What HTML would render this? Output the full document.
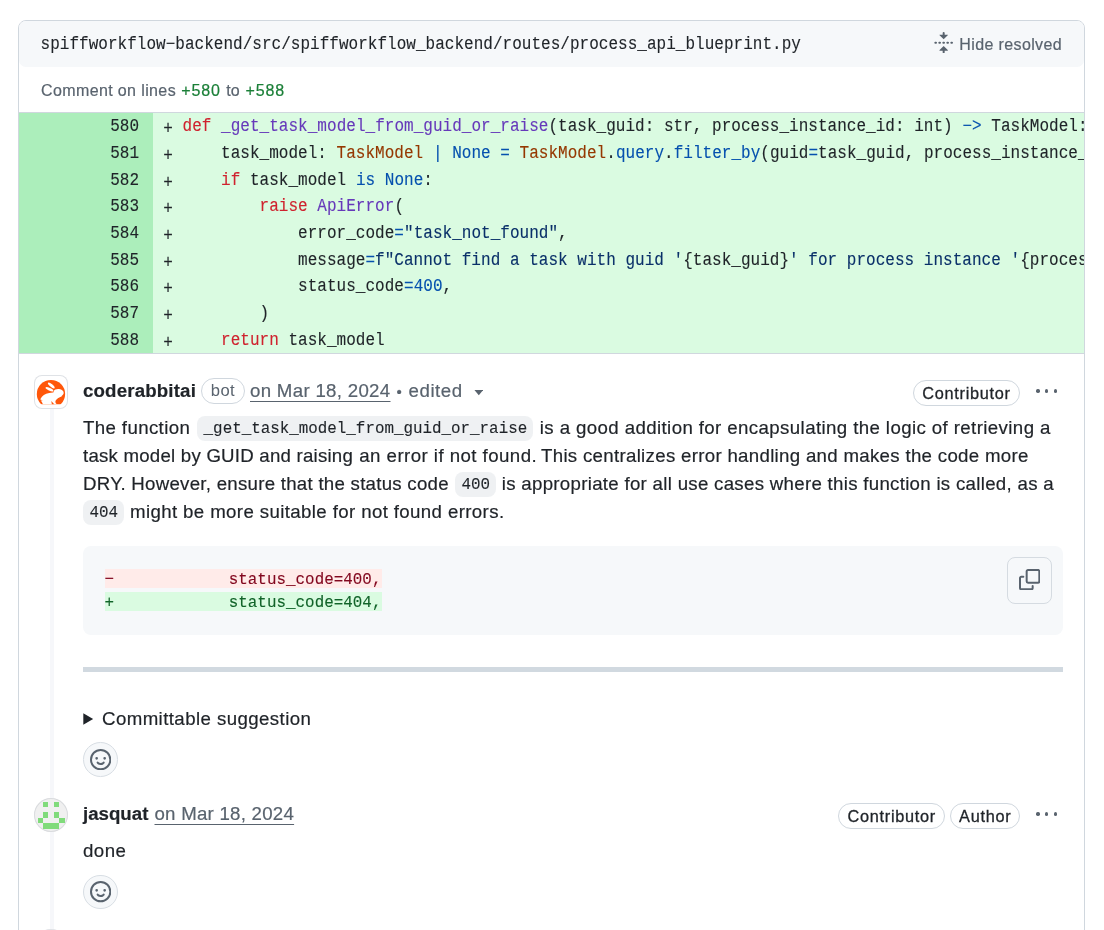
<!DOCTYPE html>
<html>
<head>
<meta charset="utf-8">
<style>
html,body{margin:0;padding:0;background:#fff;}
body{width:1104px;height:930px;overflow:hidden;position:relative;will-change:transform;font-family:"Liberation Sans",sans-serif;color:#1f2328;}
.abs{position:absolute;white-space:nowrap;}
.mono{font-family:"Liberation Mono",monospace;}
#box{position:absolute;left:18px;top:20px;width:1065px;height:930px;border:1px solid #d0d7de;border-radius:8px;}
#hdr{position:absolute;left:19px;top:21px;width:1065px;height:46px;background:#f6f8fa;border-radius:7px;}
#fname{left:40.5px;top:35.5px;font-size:16px;line-height:18px;color:#1f2328;letter-spacing:0.025px;-webkit-text-stroke:0.12px;transform:scaleY(1.09);transform-origin:0 74%;}
#hide{-webkit-text-stroke:0.2px;left:959.3px;top:36px;font-size:16px;line-height:18px;color:#59636e;}
.col{-webkit-text-stroke:0.2px;top:81.5px;font-size:16px;line-height:18px;color:#59636e;}
.col.g{color:#1a7f37;}
#code{position:absolute;left:19px;top:112.2px;width:1065px;height:242px;background:#dafbe1;overflow:hidden;border-top:1px solid #d0d7de;border-bottom:1px solid #d0d7de;box-sizing:border-box;}
#gut{position:absolute;left:0;top:0;width:134px;height:241px;background:#aceebb;}
.ln{position:absolute;left:0;width:120px;-webkit-text-stroke:0.12px;transform:scaleY(1.09);transform-origin:0 74%;text-align:right;font-size:16px;line-height:26.667px;height:26.667px;color:#1f2328;}
.cl{position:absolute;left:144.3px;letter-spacing:0.025px;-webkit-text-stroke:0.12px;transform:scaleY(1.09);transform-origin:0 74%;font-size:16px;line-height:26.667px;height:26.667px;white-space:pre;color:#1f2328;}
.pl{position:relative;top:2.8px;}
.k{color:#cf222e;}.f{color:#6639ba;}.c{color:#0550ae;}.v{color:#953800;}.s{color:#0a3069;}

#thread{position:absolute;left:50.1px;top:407px;width:3.7px;height:530px;background:#f6f7fa;}
.av1{position:absolute;left:34.1px;top:374.9px;width:33.7px;height:33.9px;border-radius:8px;background:#fff;box-shadow:inset 0 0 0 1px #dfe2e6;}
.av1 i{position:absolute;left:2.5px;top:2px;width:29px;height:29px;border-radius:50%;background:#ff570a;}
.av2{position:absolute;left:34px;top:798px;width:34px;height:33.8px;border-radius:50%;background:#f0f0f0;box-shadow:inset 0 0 0 1px #d9dbde;overflow:hidden;}
.av3{position:absolute;left:34px;top:929.2px;width:34px;height:34px;border-radius:50%;background:#f0f0f0;box-shadow:inset 0 0 0 1px #dfe2e6;}
.t{position:absolute;white-space:pre;font-size:18.667px;line-height:28px;color:#1f2328;-webkit-text-stroke:0.2px;}
.b{font-weight:bold;}
.m{color:#59636e;}
.u{text-decoration:underline;text-underline-offset:4px;text-decoration-thickness:1.3px;}
.pill{position:absolute;box-sizing:border-box;border:1px solid #d0d7de;border-radius:16px;font-size:16.3px;line-height:24px;text-align:center;white-space:nowrap;color:#1f2328;}
.pw{-webkit-text-stroke:0.3px;letter-spacing:0.72px;text-indent:0.7px;}
.ic{position:absolute;background:rgba(175,184,193,0.2);border-radius:8px;}
.ict{position:absolute;white-space:pre;font-family:"Liberation Mono",monospace;font-size:15.867px;line-height:28px;color:#1f2328;-webkit-text-stroke:0.12px;transform:scaleY(1.09);transform-origin:0 72%;margin-top:1.3px;}
#pre{position:absolute;left:83px;top:546px;width:980px;height:88.5px;background:#f6f8fa;border-radius:8px;}
.dl{position:absolute;left:105px;width:277.3px;height:19px;}
.dlt{position:absolute;left:104.6px;white-space:pre;font-family:"Liberation Mono",monospace;font-size:15.867px;line-height:23px;letter-spacing:0.03px;-webkit-text-stroke:0.12px;transform:scaleY(1.09);transform-origin:0 72%;margin-top:1.6px;}
#copy{position:absolute;left:1007px;top:557px;width:45px;height:47px;box-sizing:border-box;border:1px solid #d5dbe1;border-radius:8px;background:#f6f8fa;}
#hr{position:absolute;left:83px;top:667px;width:980px;height:4.7px;background:#d1d9e0;}
.emo{position:absolute;left:83px;width:34.7px;height:34.7px;box-sizing:border-box;border:1px solid #d8dee4;border-radius:50%;background:#f6f8fa;}
.emo svg{position:absolute;left:5.7px;top:5.7px;}
.dot{position:absolute;width:3.4px;height:3.4px;border-radius:50%;background:#59636e;}
</style>
</head>
<body>
<div id="box"></div>
<div id="hdr"></div>
<div id="fname" class="abs mono">spiffworkflow&#8722;backend/src/spiffworkflow_backend/routes/process_api_blueprint.py</div>
<svg class="abs" style="left:933px;top:32px" width="21.33" height="21.33" viewBox="0 0 16 16" fill="#59636e"><path d="M10.896 2H8.75V.75a.75.75 0 0 0-1.5 0V2H5.104a.25.25 0 0 0-.177.427l2.896 2.896a.25.25 0 0 0 .354 0l2.896-2.896A.25.25 0 0 0 10.896 2ZM8.75 15.25a.75.75 0 0 1-1.5 0V14H5.104a.25.25 0 0 1-.177-.427l2.896-2.896a.25.25 0 0 1 .354 0l2.896 2.896a.25.25 0 0 1-.177.427H8.75v1.25Zm-6.5-6.5a.75.75 0 0 0 0-1.5h-.5a.75.75 0 0 0 0 1.5h.5ZM6 8a.75.75 0 0 1-.75.75h-.5a.75.75 0 0 1 0-1.5h.5A.75.75 0 0 1 6 8Zm2.25.75a.75.75 0 0 0 0-1.5h-.5a.75.75 0 0 0 0 1.5h.5ZM12 8a.75.75 0 0 1-.75.75h-.5a.75.75 0 0 1 0-1.5h.5A.75.75 0 0 1 12 8Zm2.25.75a.75.75 0 0 0 0-1.5h-.5a.75.75 0 0 0 0 1.5h.5Z"/></svg>
<div id="hide" style="letter-spacing:0.375px;" class="abs">Hide resolved</div>
<div class="abs col" id="ca" style="left:41px;letter-spacing:0.38px;">Comment on lines</div>
<div class="abs col g" id="cb" style="left:181.3px;letter-spacing:0.85px;">+580</div>
<div class="abs col" id="cc" style="left:226.3px;">to</div>
<div class="abs col g" id="cd" style="left:245.5px;letter-spacing:0.85px;">+588</div>
<div id="code" class="mono">
<div id="gut"></div>
<div class="ln" style="top:1.3px">580</div><div class="cl" style="top:1.3px"><span class="pl">+</span> <span class="k">def</span> <span class="f">_get_task_model_from_guid_or_raise</span>(task_guid: str, process_instance_id: int) <span class="c">&#8722;&gt;</span> TaskModel:</div>
<div class="ln" style="top:27.967px">581</div><div class="cl" style="top:27.967px"><span class="pl">+</span>     task_model: <span class="v">TaskModel</span> <span class="c">|</span> <span class="c">None</span> <span class="c">=</span> <span class="v">TaskModel</span>.<span class="c">query</span>.<span class="c">filter_by</span>(guid<span class="c">=</span>task_guid, process_instance_id<span class="c">=</span>process_instance_id).first()</div>
<div class="ln" style="top:54.634px">582</div><div class="cl" style="top:54.634px"><span class="pl">+</span>     <span class="k">if</span> task_model <span class="c">is</span> <span class="c">None</span>:</div>
<div class="ln" style="top:81.301px">583</div><div class="cl" style="top:81.301px"><span class="pl">+</span>         <span class="k">raise</span> <span class="f">ApiError</span>(</div>
<div class="ln" style="top:107.968px">584</div><div class="cl" style="top:107.968px"><span class="pl">+</span>             error_code<span class="c">=</span><span class="s">"task_not_found"</span>,</div>
<div class="ln" style="top:134.635px">585</div><div class="cl" style="top:134.635px"><span class="pl">+</span>             message<span class="c">=</span><span class="s">f"Cannot find a task with guid '</span>{task_guid}<span class="s">' for process instance '</span>{process_instance_id}<span class="s">'"</span>,</div>
<div class="ln" style="top:161.302px">586</div><div class="cl" style="top:161.302px"><span class="pl">+</span>             status_code<span class="c">=</span><span class="c">400</span>,</div>
<div class="ln" style="top:187.969px">587</div><div class="cl" style="top:187.969px"><span class="pl">+</span>         )</div>
<div class="ln" style="top:214.636px">588</div><div class="cl" style="top:214.636px"><span class="pl">+</span>     <span class="k">return</span> task_model</div>
</div>

<div id="thread"></div>
<div class="av1"></div>
<svg class="abs" style="left:32px;top:372px" width="40" height="40" viewBox="0 0 930 930">
<defs><clipPath id="cc1"><circle cx="441" cy="514" r="329"/></clipPath><clipPath id="cc2"><rect x="0" y="0" width="930" height="752"/></clipPath></defs>
<g clip-path="url(#cc2)"><circle cx="441" cy="514" r="329" fill="#ff570a"/>
<g clip-path="url(#cc1)" fill="#fff">
<ellipse cx="448" cy="312" rx="98" ry="32" transform="rotate(40 448 312)"/>
<ellipse cx="405" cy="402" rx="98" ry="31" transform="rotate(24 405 402)"/>
<ellipse cx="618" cy="480" rx="120" ry="86" transform="rotate(8 618 480)"/>
<path d="M196 628 C235 555 300 500 400 488 L530 470 L705 555 C650 600 565 615 545 680 C538 715 560 742 595 760 L255 760 C245 720 228 695 214 672 Z"/>
<path d="M448 672 L528 760 L464 760 Z" fill="#ff570a"/>
<path d="M215 640 L250 668 L205 672 Z" fill="#ff570a" opacity="0.5"/>
</g></g>
</svg>
<div class="av2"><svg width="34" height="34" viewBox="0 0 34 34" fill="#80db7b" shape-rendering="crispEdges" style="position:absolute;left:0;top:0"><rect x="9.06" y="3.56" width="5.43" height="5.43"/><rect x="19.82" y="3.56" width="5.43" height="5.43"/><rect x="9.06" y="14.32" width="5.43" height="5.43"/><rect x="19.82" y="14.32" width="5.43" height="5.43"/><rect x="3.68" y="19.7" width="5.43" height="5.43"/><rect x="25.2" y="19.7" width="5.43" height="5.43"/><rect x="9.06" y="25.08" width="5.43" height="5.43"/><rect x="14.44" y="25.08" width="5.43" height="5.43"/><rect x="19.82" y="25.08" width="5.43" height="5.43"/></svg></div>
<div class="av3"></div>

<div class="t b" id="a1" style="letter-spacing:0.172px;left:83px;top:377px;">coderabbitai</div>
<div class="pill m" id="botp" style="left:201px;top:378.3px;width:43.5px;height:25.3px;line-height:23.8px;color:#59636e;font-size:16.6px;letter-spacing:0.45px;text-indent:0.4px;">bot</div>
<div class="t m u" id="d1" style="letter-spacing:0.308px;left:250px;top:377px;">on Mar 18, 2024</div>
<div class="t m" id="e1" style="left:396.6px;top:377.5px;font-size:15px;">•</div>
<div class="t m" id="e2" style="letter-spacing:0.568px;left:408.5px;top:377px;">edited</div>
<svg class="abs" style="left:473.8px;top:390.3px" width="9.6" height="5.4" viewBox="0 0 12 7"><path d="M0.3 0h11.4L6 6.8z" fill="#59636e"/></svg>
<div class="pill pw" id="p1" style="left:912.8px;top:380px;width:106.8px;height:25.6px;line-height:25.2px;">Contributor</div>
<div class="dot" style="left:1036.3px;top:389.3px"></div><div class="dot" style="left:1045px;top:389.3px"></div><div class="dot" style="left:1053.7px;top:389.3px"></div>

<div class="t" id="l1a" style="letter-spacing:0.376px;left:83px;top:413.5px;">The function</div>
<div class="ic" style="left:196.8px;top:416px;width:336.7px;height:25px;"></div>
<div class="ict" id="c1" style="left:203.6px;top:413.5px;">_get_task_model_from_guid_or_raise</div>
<div class="t" id="l1b" style="letter-spacing:0.396px;left:539.8px;top:413.5px;">is a good addition for encapsulating the logic of retrieving a</div>
<div class="t" id="l2a" style="letter-spacing:0.221px;left:83px;top:441.5px;">task model by GUID and raising</div>
<div class="t" id="l2b" style="letter-spacing:0.445px;left:359.3px;top:441.5px;">an error if not found.</div>
<div class="t" id="l2c" style="letter-spacing:0.307px;left:541px;top:441.5px;">This centralizes error handling and makes the code more</div>
<div class="t" id="l3a" style="letter-spacing:0.265px;left:83px;top:469.5px;">DRY. However, ensure that the status code</div>
<div class="ic" style="left:455px;top:472px;width:41px;height:25px;"></div>
<div class="ict" id="c2" style="left:461.4px;top:469.5px;">400</div>
<div class="t" id="l3b" style="letter-spacing:0.296px;left:501.8px;top:469.5px;">is appropriate for all use cases where this function is called, as a</div>
<div class="ic" style="left:83.3px;top:500px;width:41px;height:25px;"></div>
<div class="ict" id="c3" style="left:89.4px;top:497.5px;">404</div>
<div class="t" id="l4" style="letter-spacing:0.38px;left:130px;top:497.5px;">might be more suitable for not found errors.</div>

<div id="pre"></div>
<div class="dl" style="top:569px;background:#ffebe9;"></div>
<div class="dl" style="top:592.4px;background:#dafbe1;"></div>
<div class="dlt" style="top:567px;color:#82071e;">&#8722;            status_code=400,</div>
<div class="dlt" style="top:590px;color:#116329;">+            status_code=404,</div>
<div id="copy"><svg style="position:absolute;left:11px;top:10.8px" width="21.33" height="21.33" viewBox="0 0 16 16" fill="#59636e"><path d="M0 6.75C0 5.784.784 5 1.75 5h1.5a.75.75 0 0 1 0 1.5h-1.5a.25.25 0 0 0-.25.25v7.5c0 .138.112.25.25.25h7.5a.25.25 0 0 0 .25-.25v-1.5a.75.75 0 0 1 1.5 0v1.5A1.75 1.75 0 0 1 9.25 16h-7.5A1.75 1.75 0 0 1 0 14.25Z"/><path d="M5 1.75C5 .784 5.784 0 6.75 0h7.5C15.216 0 16 .784 16 1.75v7.5A1.75 1.75 0 0 1 14.25 11h-7.5A1.75 1.75 0 0 1 5 9.25Zm1.75-.25a.25.25 0 0 0-.25.25v7.5c0 .138.112.25.25.25h7.5a.25.25 0 0 0 .25-.25v-7.5a.25.25 0 0 0-.25-.25Z"/></svg></div>
<div id="hr"></div>

<svg class="abs" style="left:83px;top:712.8px" width="10.8" height="12.1" viewBox="0 0 11 13"><path d="M0 0.3L10.6 6.5L0 12.7z" fill="#1f2328"/></svg>
<div class="t" id="cs" style="letter-spacing:0.416px;left:102px;top:704.5px;">Committable suggestion</div>

<div class="emo" style="top:742px;"><svg width="21.33" height="21.33" viewBox="0 0 16 16" fill="#59636e"><path d="M8 0a8 8 0 1 1 0 16A8 8 0 0 1 8 0ZM1.5 8a6.5 6.5 0 1 0 13 0 6.5 6.5 0 0 0-13 0Zm3.82 1.636a.75.75 0 0 1 1.038.175l.007.009c.103.118.22.222.35.31.264.178.683.37 1.285.37.602 0 1.02-.192 1.285-.371.13-.088.247-.192.35-.31l.007-.008a.75.75 0 0 1 1.222.87l-.022-.015c.02.013.021.015.021.015v.001l-.001.002-.002.003-.005.007-.014.019a2.066 2.066 0 0 1-.184.213c-.16.166-.338.316-.53.445-.63.418-1.37.638-2.127.629-.946 0-1.652-.308-2.126-.63a3.331 3.331 0 0 1-.715-.657l-.014-.02-.005-.006-.002-.003v-.002h-.001l.613-.432-.614.43a.75.75 0 0 1 .183-1.044ZM12 7a1 1 0 1 1-2 0 1 1 0 0 1 2 0ZM5 8a1 1 0 1 1 0-2 1 1 0 0 1 0 2Z"/></svg></div>

<div class="t b" id="a2" style="letter-spacing:0.01px;left:83px;top:799.5px;">jasquat</div>
<div class="t m u" id="d2" style="letter-spacing:0.248px;left:154.5px;top:799.5px;">on Mar 18, 2024</div>
<div class="pill pw" id="p2" style="left:838.2px;top:803px;width:106.5px;height:25.7px;line-height:24.8px;">Contributor</div>
<div class="pill pw" id="p3" style="left:950.2px;top:803px;width:69.4px;height:25.7px;line-height:24.8px;">Author</div>
<div class="dot" style="left:1036.3px;top:812.4px"></div><div class="dot" style="left:1045px;top:812.4px"></div><div class="dot" style="left:1053.7px;top:812.4px"></div>
<div class="t" id="dn" style="letter-spacing:0.496px;left:83px;top:836.6px;">done</div>
<div class="emo" style="top:874.5px;"><svg width="21.33" height="21.33" viewBox="0 0 16 16" fill="#59636e"><path d="M8 0a8 8 0 1 1 0 16A8 8 0 0 1 8 0ZM1.5 8a6.5 6.5 0 1 0 13 0 6.5 6.5 0 0 0-13 0Zm3.82 1.636a.75.75 0 0 1 1.038.175l.007.009c.103.118.22.222.35.31.264.178.683.37 1.285.37.602 0 1.02-.192 1.285-.371.13-.088.247-.192.35-.31l.007-.008a.75.75 0 0 1 1.222.87l-.022-.015c.02.013.021.015.021.015v.001l-.001.002-.002.003-.005.007-.014.019a2.066 2.066 0 0 1-.184.213c-.16.166-.338.316-.53.445-.63.418-1.37.638-2.127.629-.946 0-1.652-.308-2.126-.63a3.331 3.331 0 0 1-.715-.657l-.014-.02-.005-.006-.002-.003v-.002h-.001l.613-.432-.614.43a.75.75 0 0 1 .183-1.044ZM12 7a1 1 0 1 1-2 0 1 1 0 0 1 2 0ZM5 8a1 1 0 1 1 0-2 1 1 0 0 1 0 2Z"/></svg></div>
</body>
</html>
